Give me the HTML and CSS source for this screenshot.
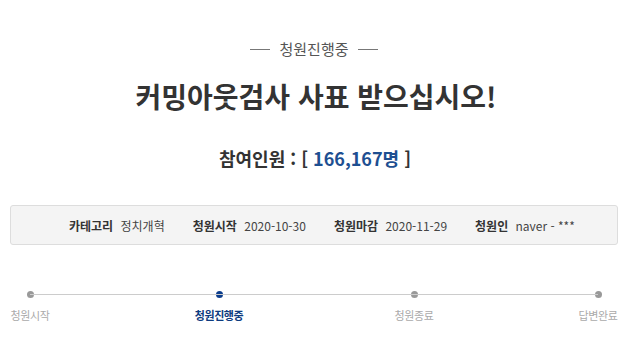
FILE: index.html
```html
<!DOCTYPE html>
<html lang="ko">
<head>
  <meta charset="UTF-8">
  <title>청원진행중</title>
  <link rel="stylesheet" href="styles.css">
</head>
<body>
  <div class="petition">
    <p class="status"><span class="status-text">청원진행중</span></p>
    <h1 class="title">커밍아웃검사 사표 받으십시오!</h1>
    <p class="count">참여인원 : [ <span class="count-num">166,167명</span> ]</p>

    <ul class="info">
      <li><strong>카테고리</strong> 정치개혁</li>
      <li><strong>청원시작</strong> 2020-10-30</li>
      <li><strong>청원마감</strong> 2020-11-29</li>
      <li><strong>청원인</strong> naver - ***</li>
    </ul>

    <ol class="progress">
      <li class="step">청원시작</li>
      <li class="step active">청원진행중</li>
      <li class="step">청원종료</li>
      <li class="step">답변완료</li>
    </ol>
  </div>
</body>
</html>
```

FILE: styles.css
```css
body {
  margin: 0;
  padding: 0;
  background-color: #fff;
  color: #333;
  font-family: "Noto Sans CJK KR", "Noto Sans", sans-serif;
}

.petition {
  padding: 0 22px 0 10px;
}

/* status label with lines on both sides */
.status {
  margin: 38px 0 0;
  display: flex;
  justify-content: center;
  align-items: center;
  gap: 9px;
  font-size: 15px;
  line-height: 22px;
  color: #555;
}

.status::before,
.status::after {
  content: "";
  width: 20px;
  height: 1px;
  background-color: #777;
}

.title {
  margin: 16px 0 0;
  text-align: center;
  font-size: 28px;
  line-height: 40px;
  font-weight: bold;
  color: #333;
  padding-left: 4px;
}

.count {
  margin: 29px 0 0;
  text-align: center;
  font-size: 18px;
  line-height: 26px;
  font-weight: bold;
  color: #333;
  padding-left: 2px;
}

.count-num {
  color: #1e4f91;
}

.info {
  list-style: none;
  margin: 34px 0 0;
  padding: 0 0 0 58px;
  height: 38px;
  display: flex;
  align-items: center;
  gap: 28px;
  background-color: #f4f4f4;
  border: 1px solid #ddd;
  border-radius: 3px;
  font-size: 12px;
  color: #444;
}

.info li {
  white-space: nowrap;
  flex-shrink: 0;
}

.info strong {
  font-weight: bold;
  color: #333;
  margin-right: 4px;
}

.progress {
  list-style: none;
  margin: 46px 0 0;
  padding: 0;
  position: relative;
  display: flex;
  justify-content: space-between;
}

/* connecting line behind the dots */
.progress::before {
  content: "";
  position: absolute;
  left: 20px;
  right: 20px;
  top: 3px;
  height: 1px;
  background-color: #ccc;
}

.step {
  width: 40px;
  display: flex;
  flex-direction: column;
  align-items: center;
  white-space: nowrap;
  font-size: 11px;
  letter-spacing: -0.4px;
  line-height: 18px;
  color: #aaa;
}

.step::before {
  content: "";
  width: 7px;
  height: 7px;
  border-radius: 50%;
  background-color: #999;
  margin-bottom: 8px;
}

.step.active {
  width: 50px;
  margin-right: 6px;
  color: #0d3b80;
  font-weight: bold;
}

.step.active::before {
  background-color: #0c3d8c;
}
```
